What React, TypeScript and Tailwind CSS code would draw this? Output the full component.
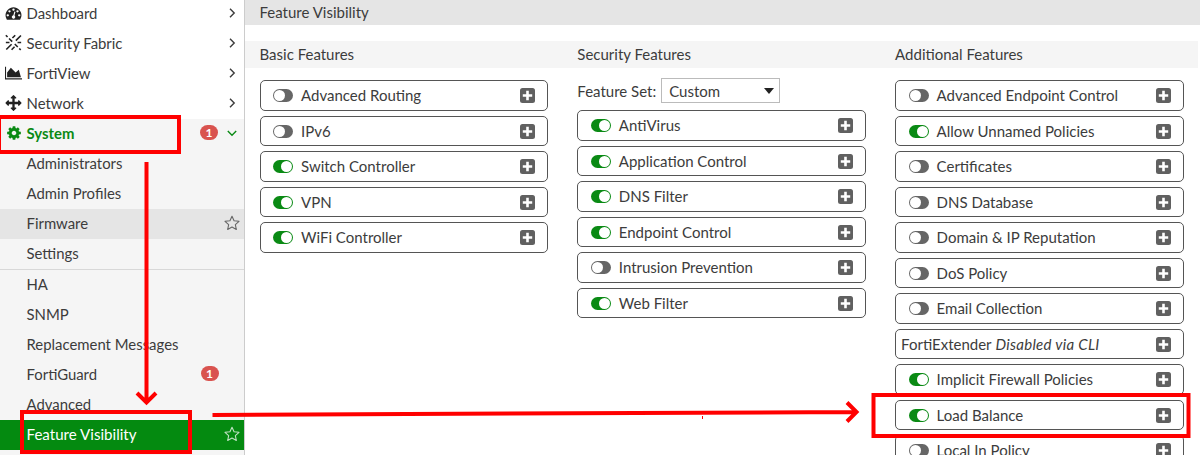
import React from 'react';

const GAUGE =
  'M384 1152q0-53-37.5-90.5t-90.5-37.5-90.5 37.5-37.5 90.5 37.5 90.5 90.5 37.5 90.5-37.5 37.5-90.5zm192-448q0-53-37.5-90.5t-90.5-37.5-90.5 37.5-37.5 90.5 37.5 90.5 90.5 37.5 90.5-37.5 37.5-90.5zm428 481l101-382q6-26-7.5-48.5t-38.5-29.5-48 6.5-30 39.5l-101 382q-60 5-107 43.5t-63 98.5q-20 77 20 146t117 89 146-20 89-117q16-60-6-117t-72-91zm660-33q0-53-37.5-90.5t-90.5-37.5-90.5 37.5-37.5 90.5 37.5 90.5 90.5 37.5 90.5-37.5 37.5-90.5zm-640-640q0-53-37.5-90.5t-90.5-37.5-90.5 37.5-37.5 90.5 37.5 90.5 90.5 37.5 90.5-37.5 37.5-90.5zm448 192q0-53-37.5-90.5t-90.5-37.5-90.5 37.5-37.5 90.5 37.5 90.5 90.5 37.5 90.5-37.5 37.5-90.5zm320 448q0 261-141 483-19 29-54 29h-1402q-35 0-54-29-141-221-141-483 0-182 71-348t191-286 286-191 348-71 348 71 286 191 191 286 71 348z';
const COG =
  'M1152 896q0-106-75-181t-181-75-181 75-75 181 75 181 181 75 181-75 75-181zm512-109v222q0 12-8 23t-20 13l-185 28q-19 54-39 91 35 50 107 138 10 12 10 25t-9 23q-27 37-99 108t-94 71q-12 0-26-9l-138-108q-44 23-91 38-16 136-29 186-7 28-36 28h-222q-14 0-24.5-8.5t-11.5-21.5l-28-184q-49-16-90-37l-141 107q-10 9-25 9-14 0-25-11-126-114-165-168-7-10-7-23 0-12 8-23 15-21 51-66.5t54-70.5q-27-50-41-99l-183-27q-13-2-21-12.5t-8-23.5v-222q0-12 8-23t19-13l186-28q14-46 39-92-40-57-107-138-10-12-10-24 0-10 9-23 26-36 98.5-107.5t94.5-71.5q13 0 26 10l138 107q44-23 91-38 16-136 29-186 7-28 36-28h222q14 0 24.5 8.5t11.5 21.5l28 184q49 16 90 37l142-107q9-9 24-9 13 0 25 10 129 119 165 170 7 8 7 22 0 12-8 23-15 21-51 66.5t-54 70.5q26 50 41 98l183 28q13 2 21 12.5t8 23.5z';
const ARROWS =
  'M1792 896q0 26-19 45l-256 256q-19 19-45 19t-45-19-19-45v-128h-384v384h128q26 0 45 19t19 45-19 45l-256 256q-19 19-45 19t-45-19l-256-256q-19-19-19-45t19-45 45-19h128v-384h-384v128q0 26-19 45t-45 19-45-19l-256-256q-19-19-19-45t19-45l256-256q19-19 45-19t45 19 19 45v128h384v-384h-128q-26 0-45-19t-19-45 19-45l256-256q19-19 45-19t45 19l256 256q19 19 19 45t-19 45-45 19h-128v384h384v-128q0-26 19-45t45-19 45 19l256 256q19 19 19 45z';
const AREA = 'M2048 1536v128h-2048v-1536h128v1408h1920zm-384-1024l256 896h-1664v-576l448-576 576 576z';

function FabricIcon() {
  return (
    <svg viewBox="0 0 16 16" className="h-[17px] w-[17px]" fill="none" stroke="currentColor" strokeWidth="1.5">
      <path d="M.8 1.2l1.6 1.6M3.8 4.2l3 3M9.2 9.400l2.800 2.800M13.400 13.600l1.400 1.400M9.600 1.200L7 3.800M15 1.400l-4.800 4.800M6.200 9.600l-5 5M9 12L6.200 14.800M11.800 8h3.400M.8 8h3.400" />
    </svg>
  );
}

function Chevron({ down = false }: { down?: boolean }) {
  return (
    <svg viewBox="0 0 10 10" className="h-2.5 w-2.5" fill="none" stroke="currentColor" strokeWidth="1.4">
      <path d={down ? 'M.8 3L5 7.2 9.2 3' : 'M3 .8L7.2 5 3 9.2'} />
    </svg>
  );
}

function Star() {
  return (
    <svg viewBox="0 0 16 16" className="h-4 w-4" fill="none" stroke="currentColor" strokeWidth="1.1" strokeLinejoin="round">
      <path d="M8 1.200l2.050 4.500 4.950.6-3.650 3.350.97 4.850L8 12.100l-4.320 2.400.97-4.850L1 6.300l4.950-.6z" />
    </svg>
  );
}

function Badge() {
  return (
    <span className="flex h-[15px] w-[18px] items-center justify-center rounded-full bg-[#d9534f] text-[12px] leading-none font-bold text-white">
      1
    </span>
  );
}

function MenuItem({ icon, label, path, box }: { icon?: React.ReactNode; label: string; path?: string; box?: string }) {
  return (
    <div className="flex h-[30px] shrink-0 items-center pr-[7px] pb-0.5 pl-[5px]">
      <span className="mr-[4.5px] flex w-[17px] justify-center text-[#222]">
        {icon ?? (
          <svg viewBox={box} className="h-4 w-[17px]" fill="currentColor">
            <path d={path} />
          </svg>
        )}
      </span>
      <span className="flex-1">{label}</span>
      <Chevron />
    </div>
  );
}

function SubItem({ label, badge, star, className = '' }: { label: string; badge?: boolean; star?: boolean; className?: string }) {
  return (
    <div className={`flex h-[30px] shrink-0 items-center pr-[4.5px] pb-0.5 pl-[26.5px] ${className}`}>
      <span className="flex-1">{label}</span>
      {badge && (
        <span className="mr-[21px]">
          <Badge />
        </span>
      )}
      {star && (
        <span className="opacity-75">
          <Star />
        </span>
      )}
    </div>
  );
}

function Toggle({ on }: { on: boolean }) {
  return (
    <span
      className={`mt-px flex h-[13px] w-5 shrink-0 items-center rounded-full p-px ${on ? 'justify-end bg-[#0a8a14]' : 'justify-start bg-[#666]'}`}
    >
      <span className="h-[11px] w-[11px] rounded-full bg-white" />
    </span>
  );
}

function Card({ label, on, note }: { label: string; on?: boolean; note?: string }) {
  return (
    <div
      className={`flex h-[30.5px] w-[288.5px] shrink-0 items-center rounded-[5px] border border-[#555] pr-[12px] ${note ? 'pl-[5px]' : 'pl-[12.5px]'}`}
    >
      {!note && <Toggle on={!!on} />}
      <span className={`flex-1 ${note ? '' : 'pl-2'}`}>
        {label}
        {note && <em className="tracking-[0.3px]"> {note}</em>}
      </span>
      <svg viewBox="0 0 15 15" className="mt-px h-[15px] w-[15px]">
        <rect width="15" height="15" rx="2.5" fill="#606060" />
        <path d="M7.5 2.8v9.4M2.8 7.5h9.4" stroke="#fff" strokeWidth="2.6" />
      </svg>
    </div>
  );
}

type Feature = { label: string; on?: boolean; note?: string };

const basic: Feature[] = [
  { label: 'Advanced Routing' },
  { label: 'IPv6' },
  { label: 'Switch Controller', on: true },
  { label: 'VPN', on: true },
  { label: 'WiFi Controller', on: true },
];
const security: Feature[] = [
  { label: 'AntiVirus', on: true },
  { label: 'Application Control', on: true },
  { label: 'DNS Filter', on: true },
  { label: 'Endpoint Control', on: true },
  { label: 'Intrusion Prevention' },
  { label: 'Web Filter', on: true },
];
const additional: Feature[] = [
  { label: 'Advanced Endpoint Control' },
  { label: 'Allow Unnamed Policies', on: true },
  { label: 'Certificates' },
  { label: 'DNS Database' },
  { label: 'Domain & IP Reputation' },
  { label: 'DoS Policy' },
  { label: 'Email Collection' },
  { label: 'FortiExtender', note: 'Disabled via CLI' },
  { label: 'Implicit Firewall Policies', on: true },
  { label: 'Load Balance', on: true },
  { label: 'Local In Policy' },
];

function Column({ title, items, children }: { title: string; items: Feature[]; children?: React.ReactNode }) {
  return (
    <section className="w-[317.8px] shrink-0">
      <h2 className="mb-3 flex h-[27px] items-center pb-0.5">{title}</h2>
      {children}
      <div className="flex flex-col gap-[5px]">
        {items.map((f) => (
          <Card key={f.label} {...f} />
        ))}
      </div>
    </section>
  );
}

export default function App() {
  return (
    <div className="relative h-[474px] w-[1200px] overflow-hidden bg-white font-['Lato',sans-serif] text-[15px] leading-5 text-[#3c3c3c]">
      <div className="flex h-[455px] overflow-hidden">
        <nav className="flex w-[245px] shrink-0 flex-col border-r border-[#ccc] text-[14.9px]">
          <div className="-mt-[1.5px] flex shrink-0 flex-col">
            <MenuItem label="Dashboard" path={GAUGE} box="0 0 1792 1792" />
            <MenuItem label="Security Fabric" icon={<FabricIcon />} />
            <MenuItem label="FortiView" path={AREA} box="0 0 2048 1792" />
            <MenuItem label="Network" path={ARROWS} box="0 0 1792 1792" />
          </div>
          <div className="flex flex-1 flex-col bg-[#f5f5f5]">
            <div className="flex h-[30px] shrink-0 items-center pr-[7px] pb-0.5 pl-[5px] font-bold text-[#0a8a14]">
              <span className="mr-[4.5px] flex w-[17px] justify-center">
                <svg viewBox="0 0 1792 1792" className="h-4 w-4" fill="currentColor">
                  <path d={COG} />
                </svg>
              </span>
              <span className="flex-1">System</span>
              <span className="mr-[9px]">
                <Badge />
              </span>
              <Chevron down />
            </div>
            <SubItem label="Administrators" />
            <SubItem label="Admin Profiles" />
            <SubItem label="Firmware" star className="bg-[#e5e5e5]" />
            <SubItem label="Settings" />
            <div className="h-px shrink-0 bg-[#d8d8d8]" />
            <SubItem label="HA" />
            <SubItem label="SNMP" />
            <SubItem label="Replacement Messages" />
            <SubItem label="FortiGuard" badge />
            <SubItem label="Advanced" />
            <SubItem label="Feature Visibility" star className="bg-[#048a10] text-[15.1px] text-white" />
          </div>
        </nav>
        <main className="min-w-0 flex-1">
          <h1 className="flex h-[25px] items-center bg-[#e5e5e5] pb-0.5 pl-[14.5px]">Feature Visibility</h1>
          <div className="mt-4 mr-0.5 bg-[linear-gradient(#f5f5f5_27px,transparent_27px)] pl-[14.5px]">
            <div className="flex">
              <Column title="Basic Features" items={basic} />
              <Column title="Security Features" items={security}>
                <div className="-mt-0.5 mb-[7px] flex h-[25px] items-center">
                  <span>Feature Set:</span>
                  <span className="ml-[5px] flex h-[25px] w-[119px] items-center justify-between border border-[#bbb] pr-[5px] pl-[7px]">
                    Custom
                    <svg viewBox="0 0 10 6" className="h-[6px] w-[10px]">
                      <path d="M0 0h10L5 6z" fill="#222" />
                    </svg>
                  </span>
                </div>
              </Column>
              <Column title="Additional Features" items={additional} />
            </div>
          </div>
        </main>
      </div>
      <svg className="pointer-events-none absolute inset-0" width="1200" height="474" fill="none" stroke="#f00" strokeWidth="4">
        <rect x="-1" y="117" width="180" height="35" />
        <rect x="22" y="412" width="168" height="40" />
        <rect x="873.5" y="395" width="315" height="41" />
        <path d="M146.5 162v240M137 393l9.5 9.5 9.5-9.5" />
        <path d="M212.5 415L856 412M847 402.500l9.500 9.500-9.500 9.500" />
        <path d="M702.500 416v3" strokeWidth="1" />
      </svg>
    </div>
  );
}
